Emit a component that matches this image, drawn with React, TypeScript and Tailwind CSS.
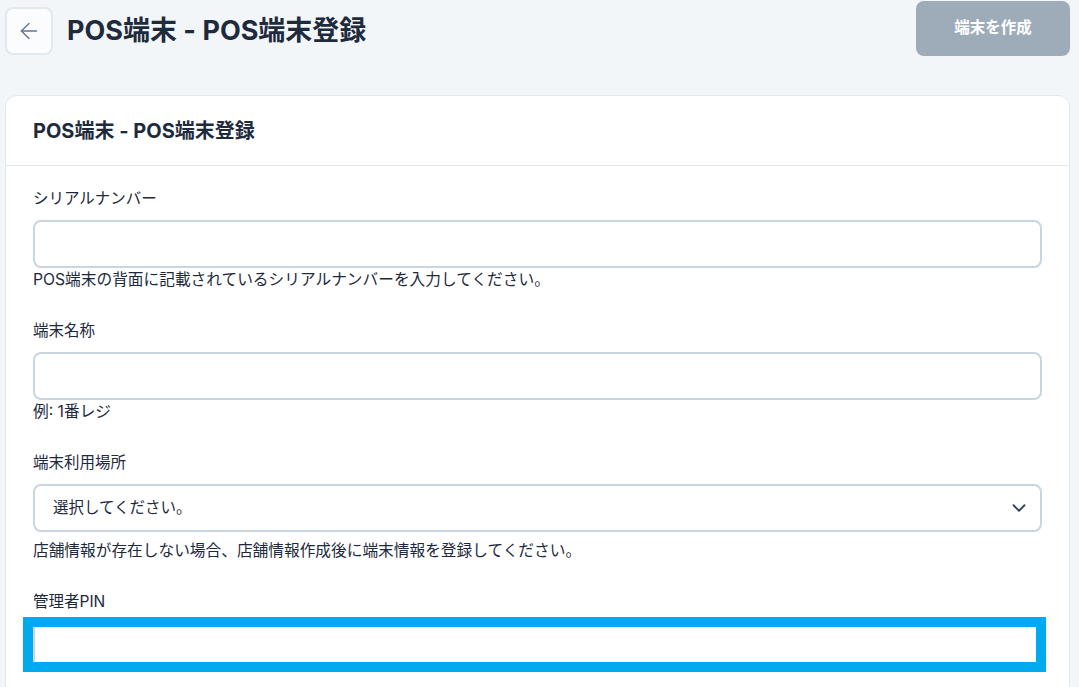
import { ArrowLeft, ChevronDown } from 'lucide-react';

const font = { fontFamily: 'Inter, "Noto Sans CJK JP", sans-serif' };

function Field({ label, help, helpGap, children }: { label: string; help?: string; helpGap?: string; children: React.ReactNode }) {
  return (
    <div className="flex flex-col">
      <label className="text-[15.5px] leading-[22px] text-slate-800 mb-[10px]">{label}</label>
      {children}
      {help && <p className={`text-[15.7px] leading-[20px] text-slate-800 ${helpGap ?? 'mt-[2px]'}`}>{help}</p>}
    </div>
  );
}

export default function App() {
  return (
    <div className="min-h-[687px] bg-[#f3f6f9] pl-[5px] pr-[9px]" style={font}>
      <div className="flex items-center justify-between h-[58px] pt-[4px]">
        <div className="flex items-center gap-[14px]">
          <button className="w-[48px] h-[48px] rounded-lg border-2 border-slate-200 bg-[#fafcfd] flex items-center justify-center">
            <ArrowLeft className="w-[26px] h-[26px] text-slate-500" strokeWidth={1.25} />
          </button>
          <h1 className="text-[27px] font-bold text-[#1e2b3c]">POS端末 - POS端末登録</h1>
        </div>
        <button className="w-[154px] h-[55px] -mt-[6px] rounded-lg bg-[#9eacba] text-white text-[15.5px] font-bold">
          端末を作成
        </button>
      </div>

      <div className="mt-[37px] bg-white rounded-xl border border-slate-200">
        <div className="h-[70px] flex items-center px-[27px] border-b border-slate-200">
          <h2 className="text-[20px] font-bold text-[#1e2b3c]">POS端末 - POS端末登録</h2>
        </div>
        <div className="pl-[27px] pr-[27px] pt-[22px] flex flex-col gap-[30px]">
          <Field label="シリアルナンバー" help="POS端末の背面に記載されているシリアルナンバーを入力してください。">
            <input className="h-[48px] rounded-lg border-2 border-slate-300 bg-white px-4" />
          </Field>
          <Field label="端末名称" help="例: 1番レジ">
            <input className="h-[48px] rounded-lg border-2 border-slate-300 bg-white px-4" />
          </Field>
          <Field label="端末利用場所" help="店舗情報が存在しない場合、店舗情報作成後に端末情報を登録してください。" helpGap="mt-[9px]">
            <div className="h-[48px] rounded-lg border-2 border-slate-300 bg-white flex items-center justify-between pl-[18px] pr-[10px]">
              <span className="text-[15.5px] text-slate-800">選択してください。</span>
              <ChevronDown className="w-[22px] h-[22px] text-slate-700" strokeWidth={2} />
            </div>
          </Field>
          <div className="flex flex-col">
            <label className="text-[15.5px] leading-[22px] text-slate-800 mb-[4px]">管理者PIN</label>
            <div className="-ml-[10px] mr-[-4px] h-[55px] border-[10px] border-[#00aaef] bg-white flex">
              <div className="w-[2px] bg-slate-300" />
            </div>
          </div>
        </div>
        <div className="h-[40px]" />
      </div>
    </div>
  );
}
